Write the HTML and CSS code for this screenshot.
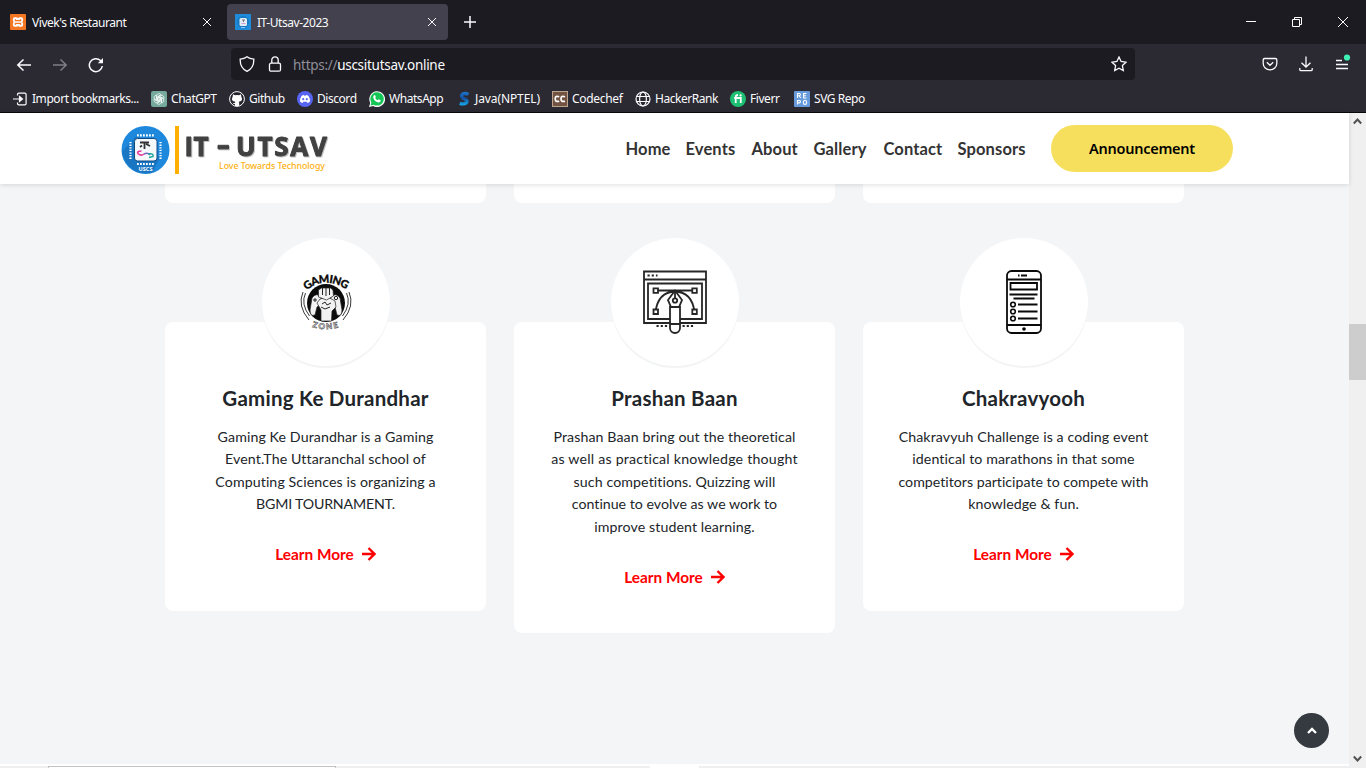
FILE: index.html
```html
<!DOCTYPE html>
<html lang="en">
<head>
<meta charset="utf-8">
<title>IT-Utsav-2023</title>
<link rel="stylesheet" href="styles.css">
</head>
<body>
<div class="browser">
  <div class="tabs">
    <div class="tab">
      <svg class="i16" viewBox="0 0 16 16"><rect width="16" height="16" rx="1" fill="#f37623"/><path d="M4.800 3.200h1.100q1.300 0 2.100.9.800-.9 2.100-.9h1.100q2 0 2 2.200 0 1.500-.9 2.600.9 1.100.9 2.600 0 2.200-2 2.200h-1.100q-1.300 0-2.100-.9-.8.9-2.100.9H4.800q-2 0-2-2.200 0-1.500.9-2.600-.9-1.100-.9-2.600 0-2.200 2-2.200z" fill="#fff"/><path d="M5.400 5.300v1.400h5.200V5.300M5.400 10.700V9.300h5.200v1.400" fill="none" stroke="#f37623" stroke-width="1.300"/></svg>
      <span class="tt">Vivek's Restaurant</span>
      <svg class="x" viewBox="0 0 8 8"><path d="M0 0l8 8M8 0L0 8"/></svg>
    </div>
    <div class="tab on">
      <svg class="i16" viewBox="0 0 16 16"><rect width="16" height="16" fill="#1f8bdb"/><circle cx="8" cy="8" r="6" fill="#1779c4"/><rect x="4.500" y="4" width="7.500" height="8" rx="1.500" fill="#dfeaf5"/><path d="M7 6h3M8.500 6v2" stroke="#777"/><path d="M6.500 9.500h4" stroke="#d39bd0"/><path d="M6 13.500h4" stroke="#8cc4f0"/></svg>
      <span class="tt">IT-Utsav-2023</span>
      <svg class="x" viewBox="0 0 8 8"><path d="M0 0l8 8M8 0L0 8"/></svg>
    </div>
    <svg class="plus" viewBox="0 0 12 12"><path d="M6 0v12M0 6h12"/></svg>
    <div class="win">
      <svg viewBox="0 0 10 10"><path d="M0 4.500h10"/></svg>
      <svg viewBox="0 0 10 10"><path d="M.5 2.500h7v7h-7zM2.500 2.500v-2h7v7h-2"/></svg>
      <svg viewBox="0 0 10 10"><path d="M0 0l10 10M10 0L0 10"/></svg>
    </div>
  </div>
  <div class="bar">
    <div class="navs">
      <svg viewBox="0 0 16 16"><path d="M15 8H1.500M7.500 2.500L1.800 8l5.700 5.500"/></svg>
      <svg class="dim" viewBox="0 0 16 16"><path d="M1 8h13.500M8.500 2.500L14.200 8l-5.700 5.500"/></svg>
      <svg viewBox="0 0 16 16"><path d="M14.300 9A6.500 6.500 0 1 1 12.500 3.600L14 5"/><path d="M15 1v5.200H9.800z" fill="#fbfbfe" stroke="none"/></svg>
    </div>
    <div class="url">
      <svg class="i16" viewBox="0 0 16 16"><path d="M8 .8C6.200 2.300 3.800 3 1.200 3.200 1 8.500 3 13 8 15.300c5-2.300 7-6.800 6.800-12.100C12.200 3 9.800 2.300 8 .8z"/></svg>
      <svg class="i16" viewBox="0 0 16 16"><rect x="2.500" y="7.200" width="11" height="8" rx="1.500"/><path d="M4.800 7V4a3.200 3.200 0 0 1 6.400 0v3"/></svg>
      <span class="addr"><i>https://</i>uscsitutsav.online</span>
      <svg class="star" viewBox="0 0 16 16"><path d="M8 1l2.100 4.500 4.900.7-3.600 3.400.9 5L8 12.200l-4.300 2.400.9-5L1 6.200l4.900-.7z"/></svg>
    </div>
    <div class="tools">
      <svg viewBox="0 0 16 16"><path d="M2.500 2.500h11q1.300 0 1.300 1.300V7.500a6.800 6.300 0 0 1-13.600 0V3.800Q1.200 2.500 2.500 2.500zM4.800 6.300L8 9.300l3.200-3"/></svg>
      <svg viewBox="0 0 16 16"><path d="M8 .5v10.500M3.500 6.800L8 11l4.500-4.200M1.800 12v1.500q0 1.200 1.200 1.200h10q1.200 0 1.200-1.200V12"/></svg>
      <svg viewBox="0 0 16 16"><path d="M2 4.500h6M2 8.500h12M2 12.500h12"/><circle cx="13" cy="1.500" r="3.100" fill="#3ff0b5" stroke="none"/></svg>
    </div>
  </div>
  <div class="marks">
    <div><svg viewBox="0 0 16 16" class="ln"><path d="M5.500 4.500v-1q0-1.300 1.300-1.300h6q1.300 0 1.300 1.300v9q0 1.300-1.300 1.300h-6q-1.300 0-1.300-1.300v-1M1 8h8"/><path d="M7.500 5.500L10.500 8l-3 2.500z" fill="#fbfbfe"/></svg>Import bookmarks...</div>
    <div><svg viewBox="0 0 16 16"><rect width="16" height="16" rx="2" fill="#74a99b"/><g fill="none" stroke="#fff" stroke-width=".7"><path id="k" d="M5.600 8.900V4.800q.3-2 2.400-2.100 1.300 0 2.100 1L6.900 5.600v4.100"/><use href="#k" transform="rotate(60 8 8)"/><use href="#k" transform="rotate(120 8 8)"/><use href="#k" transform="rotate(180 8 8)"/><use href="#k" transform="rotate(240 8 8)"/><use href="#k" transform="rotate(300 8 8)"/></g></svg>ChatGPT</div>
    <div><svg viewBox="0 0 16 16"><circle cx="8" cy="8" r="7.400" fill="#24232b" stroke="#fff"/><path d="M4 3.200l2 1.100q2-.5 4 0l2-1.100.3 2.200q2.200 4.600-2.600 5.400.6.700.5 1.700v2.500H5.900v-2q-1.600.2-2.400-1.500 1.500.9 2.500.2l.3-.9Q1.500 10 3.700 5.400z" fill="#fff"/></svg>Github</div>
    <div><svg viewBox="0 0 16 16"><circle cx="8" cy="8" r="8" fill="#5865f2"/><path d="M4.500 5q1.300-.9 2.500-1l.4.700h1.200L9 4q1.300.1 2.500 1 1.600 2.600 1.500 5.500-1.200 1.100-2.600 1.400l-.7-1.200H6.300l-.7 1.200Q4.200 11.600 3 10.500 2.900 7.600 4.500 5z" fill="#fff"/><circle cx="6.200" cy="8.200" r="1.100" fill="#5865f2"/><circle cx="9.800" cy="8.200" r="1.100" fill="#5865f2"/></svg>Discord</div>
    <div><svg viewBox="0 0 16 16"><path d="M0 16l1.200-4.100A7.900 7.900 0 1 1 4.200 15z" fill="#fff"/><path d="M1.500 14.500l.9-3A6.700 6.700 0 1 1 4.700 13.700z" fill="#14c656"/><path d="M5 4.200l1-.2.900 2-.7 1q1 1.700 2.600 2.300l.9-1 2 1q.2 2-1.800 2.200Q5.500 11 4.200 6.500q-.1-1.500.8-2.300z" fill="#fff"/></svg>WhatsApp</div>
    <div class="java"><svg viewBox="0 0 16 16"><defs><linearGradient id="sg" gradientUnits="userSpaceOnUse" x1="0" y1="1" x2="0" y2="15"><stop stop-color="#1d74cb"/><stop offset=".45" stop-color="#14509c"/><stop offset="1" stop-color="#16b4f5"/></linearGradient></defs><path d="M11.500 3.400Q8.500 1.800 6 2.900 3.300 4.800 5.800 7.100L9 8.600q2 1.600.2 3.300-2.400 1.700-6.500.4" fill="none" stroke="url(#sg)" stroke-width="3.400"/></svg>Java(NPTEL)</div>
    <div class="cc"><svg viewBox="0 0 16 16"><rect x=".5" y=".5" width="15" height="15" fill="#735443" stroke="#bba58f"/><path d="M7.200 5.800Q3.200 4.300 3.200 7.800t4 2.400M13 5.800Q9 4.300 9 7.800t4 2.400" fill="none" stroke="#fff" stroke-width="1.700"/></svg>Codechef</div>
    <div><svg viewBox="0 0 16 16" class="ln"><circle cx="8" cy="8" r="7"/><ellipse cx="8" cy="8" rx="3.400" ry="7"/><path d="M1.800 5.500h12.400M1.800 10.500h12.400"/></svg>HackerRank</div>
    <div><svg viewBox="0 0 16 16"><circle cx="8" cy="8" r="8" fill="#1dbf73"/><path d="M5.700 12V6q0-2 2.300-2M4.200 7h6.600v5" fill="none" stroke="#fff" stroke-width="1.800"/><circle cx="10.600" cy="4.400" r="1.100" fill="#fff"/></svg>Fiverr</div>
    <div><svg viewBox="0 0 16 16"><rect width="16" height="16" rx="1" fill="#689bdb"/><g fill="none" stroke="#fff" stroke-width="1.100"><path d="M3.500 7V2.500h2q2 1 0 2.200h-2M5 4.700L6.800 7M12.500 2.500H9.600V7h2.900M9.600 4.700h2.500M3.500 13.500V9.500h2q2 1 0 2.400h-2"/><ellipse cx="11" cy="11.400" rx="1.700" ry="2"/></g></svg>SVG Repo</div>
  </div>
</div>
<div class="view">
  <div class="page">
    <header class="head">
      <svg class="logo" viewBox="0 0 210 52">
        <circle cx="25.500" cy="26" r="24" fill="#1e88dc"/><path d="M2 28L17 11 40 34 32 49Q8 52 2 28z" fill="#176db5" opacity=".65"/>
        <g stroke="#fff" stroke-width="2.200" fill="none"><path d="M17 11.300h17M17 40h17" stroke-dasharray="1.800 1.200"/><path d="M10.500 18v17M40.500 18v17" stroke-dasharray="1.300 1.300"/></g>
        <rect x="14.500" y="14.500" width="22.500" height="22.500" rx="3" fill="#f4f8fb" stroke="#104b82"/>
        <path d="M20 18.500h9M24.500 18v7M22 21.500l-2 1.500M26 20l4 2" stroke="#333" stroke-width="1.800" fill="none"/>
        <path d="M21.500 27q-5 0-3.500 2.500 3 3 6 .5" fill="none" stroke="#e6399b" stroke-width="1.600"/><path d="M24 30q4-2 6 1" fill="none" stroke="#7a62c9" stroke-width="1.500"/><path d="M28 30q6-1 5 2.500l-4 1" fill="none" stroke="#18a999" stroke-width="1.500"/>
        <text x="18.500" y="46.500" class="uscs" textLength="14">USCS</text>
        <rect x="55" y="2" width="4" height="48" fill="#ffb000"/>
        <g class="lg"><text x="64.500" y="32" textLength="24">IT</text><rect x="98" y="21.300" width="10.500" height="3.600"/><text x="116" y="32" textLength="91">UTSAV</text></g>
        <text x="99" y="45.200" class="tag" textLength="106">Love Towards Technology</text>
      </svg>
      <nav class="menu">
        <a>Home</a><a>Events</a><a>About</a><a>Gallery</a><a>Contact</a><a>Sponsors</a>
      </nav>
      <div class="btn">Announcement</div>
    </header>
    <div class="stubs"><div></div><div></div><div></div></div>
    <main class="cards">
      <section class="card">
        <div class="disc"><svg viewBox="0 0 64 64">
          <path id="arcT" d="M12.500 20.500Q31 5 54 20.500" fill="none"/><path id="arcB" d="M18 57Q32 61.500 46 57" fill="none"/>
          <text class="gz"><textPath href="#arcT" textLength="43">GAMING</textPath></text>
          <text class="gz2"><textPath href="#arcB" textLength="27">ZONE</textPath></text>
          <circle cx="32" cy="33" r="19" fill="#0b0b0b"/>
          <g fill="none" stroke="#222" stroke-width=".9"><path d="M11.500 23q-5 11 4 23M9 22q-6 14 6 28M52.500 23q5 11-4 23M55 22q6 14-6 28"/></g>
          <g fill="#f2f2f2" stroke="#222" stroke-width=".7"><path d="M18 28q4-6 9-1l1 6-5 4-2 8q-5 2-5-5zM46 28q-4-6-9-1l-1 6 5 4 2 8q5 2 5-5z"/><path d="M27 51l0-11-4-7 3-4 8-2 7 4 1 6-4 4-.5 10z"/><path d="M24.500 20l3-2h9l2.500 2 .5 6-7 4-8-3z"/></g>
          <g fill="none" stroke="#222" stroke-width="1"><path d="M28.500 18v7M32 18v8M35.500 18v7M19 30h4M21 28v4M28 34l3-2 2 3 4-2M27 37l4 2 5-2"/></g><circle cx="42" cy="28" r="1.700" fill="none" stroke="#222"/>
        </svg></div>
        <h3>Gaming Ke Durandhar</h3>
        <p><span>Gaming Ke Durandhar is a Gaming</span><span>Event.The Uttaranchal school of</span><span>Computing Sciences is organizing a</span><span class="tight">BGMI TOURNAMENT.</span></p>
        <a class="more">Learn More<svg viewBox="0 0 14 14"><path d="M0 7h12M6.500 1l6 6-6 6"/></svg></a>
      </section>
      <section class="card">
        <div class="disc"><svg viewBox="0 0 64 64" fill="none" stroke="#262626" stroke-width="1.800">
          <path d="M1 1.500h62v51.500H1zM1 9.500h62M5 13.500h54v35.500H5z"/><path d="M12.500 20.500h39M12.500 42Q15 22 32 21.500 49 22 51.500 42"/>
          <g fill="#fff"><path d="M10.500 18.300h4.500v4.500h-4.500zM49.300 18.300h4.500v4.500h-4.500zM10.500 39.500h4.500v4.500h-4.500zM49.300 39.500h4.500v4.500h-4.500z"/><path d="M32 20.500l7 9.500-3 7h-8l-3-7z"/><path d="M27 37h10v21a5 5 0 0 1-10 0z"/></g>
          <path d="M27 54h10M32 21v7"/><circle cx="32" cy="30.500" r="2.200"/><path d="M4.500 5.500h10M13.500 56h11M39.500 56h11" stroke-dasharray="2.200 2"/>
        </svg></div>
        <h3>Prashan Baan</h3>
        <p><span>Prashan Baan bring out the theoretical</span><span class="wide">as well as practical knowledge thought</span><span>such competitions. Quizzing will</span><span class="even">continue to evolve as we work to</span><span>improve student learning.</span></p>
        <a class="more">Learn More<svg viewBox="0 0 14 14"><path d="M0 7h12M6.500 1l6 6-6 6"/></svg></a>
      </section>
      <section class="card">
        <div class="disc"><svg viewBox="0 0 64 64" fill="none" stroke="#0a0a0a" stroke-width="1.800">
          <rect x="15" y="1" width="34" height="62" rx="4.500"/><path d="M15 9.500h34M15 55h34M18.500 13h26.500v6.500H18.500zM17.500 24.500h28M21.500 28.500h21M26 34.500h19.500M26 41.500h19.500M26 48.500h19.500"/>
          <g stroke-width="1.600"><circle cx="21" cy="34.500" r="2.300"/><circle cx="21" cy="41.500" r="2.300"/><circle cx="21" cy="48.500" r="2.300"/></g><circle cx="32" cy="59" r="1.800" fill="#000" stroke="none"/><path d="M29 5.500h6M26 5.500h1.500" stroke-width="2"/>
        </svg></div>
        <h3>Chakravyooh</h3>
        <p><span>Chakravyuh Challenge is a coding event</span><span>identical to marathons in that some</span><span class="even">competitors participate to compete with</span><span>knowledge &amp; fun.</span></p>
        <a class="more">Learn More<svg viewBox="0 0 14 14"><path d="M0 7h12M6.500 1l6 6-6 6"/></svg></a>
      </section>
    </main>
    <div class="top"><svg viewBox="0 0 10 8"><path d="M1 6l4-4 4 4"/></svg></div>
    <footer class="hs"><div class="hthumb"></div><div class="hgap"></div></footer>
  </div>
  <div class="scroll">
    <svg viewBox="0 0 9 7"><path d="M.8 5.500l3.700-4 3.700 4"/></svg>
    <div class="thumb"></div>
    <svg viewBox="0 0 9 7"><path d="M.8 1.500l3.700 4 3.700-4"/></svg>
  </div>
</div>
</body>
</html>
```
FILE: styles.css
```css
* { box-sizing: border-box; }
body { margin: 0; width: 1366px; height: 768px; overflow: hidden; font-family: "Lato", sans-serif; font-variant-ligatures: none; }
svg { display: block; flex: none; }
.i16 { width: 16px; height: 16px; }

/* Browser chrome */
.browser { height: 113px; background: #2b2a33; border-bottom: 1px solid #08080a; color: #fbfbfe; font-family: "Noto Sans", sans-serif; font-size: 12px; letter-spacing: -.45px; white-space: nowrap; }
.tabs { height: 44px; background: #1c1b22; display: flex; align-items: center; padding-left: 2px; }
.tab { display: flex; align-items: center; width: 221px; height: 36px; padding: 0 12px 0 8px; }
.tab.on { background: #42414d; border-radius: 4px; margin-left: 4px; }
.tab .tt { flex: 1; margin-left: 6px; line-height: 16px; padding-top: 1px; }
.x { width: 8px; height: 8px; fill: none; stroke: #fbfbfe; }
.plus { width: 12px; height: 12px; margin-left: 16px; fill: none; stroke: #fbfbfe; stroke-width: 1.5; }
.win { margin-left: auto; display: flex; gap: 36px; padding-right: 18px; }
.win svg { width: 10px; height: 10px; fill: none; stroke: #fff; }
.bar { height: 42px; display: flex; align-items: center; padding-bottom: 2px; }
.navs { display: flex; gap: 20px; width: 231px; padding: 1px 0 0 16px; }
.navs svg { width: 16px; height: 16px; fill: none; stroke: #fbfbfe; stroke-width: 1.5; }
.navs .dim { opacity: .4; }
.url { width: 904px; height: 32px; background: #1c1b22; border-radius: 4px; display: flex; align-items: center; padding: 0 8px; gap: 12px; }
.url svg { fill: none; stroke: #fbfbfe; stroke-width: 1.3; }
.url .star { width: 16px; height: 16px; }
.addr { flex: 1; font-size: 13.5px; letter-spacing: -.29px; margin-left: -2px; padding-top: 1px; }
.addr i { font-style: normal; color: #8f8f98; }
.tools { display: flex; gap: 20px; margin-left: 127px; }
.tools svg { width: 16px; height: 16px; fill: none; stroke: #fbfbfe; stroke-width: 1.3; overflow: visible; }
.marks { display: grid; grid-template-columns: 139px 78px 68px 72px 88px 95px 83px 95px 64px 80px; padding-left: 12px; height: 25px; }
.marks div { display: flex; align-items: center; gap: 4px; }
.marks .java { gap: 2px; letter-spacing: -.1px; }
.marks .cc { letter-spacing: -.3px; }
.marks svg { width: 16px; height: 16px; }
.marks .ln { fill: none; stroke: #fbfbfe; stroke-width: 1.2; }

/* Page */
.view { display: flex; height: 655px; }
.page { width: 1349px; background: #f4f5f7; position: relative; display: flex; flex-direction: column; }
.head { height: 71px; background: #fff; box-shadow: 0 1px 5px rgba(0,0,0,.13); display: flex; align-items: center; padding-left: 120px; flex: none; position: relative; z-index: 2; }
.logo { width: 210px; height: 52px; margin-top: 3px; }
.uscs { font: 700 5.5px "Open Sans", sans-serif; fill: #fff; }
.lg { font: 700 26px "Open Sans", sans-serif; fill: #414141; stroke: #414141; stroke-width: 1; stroke-linejoin: round; filter: drop-shadow(1px 1.5px 0 #c2c2c2); }
.tag { font: 500 8.8px "Noto Sans", sans-serif; fill: #fdb010; }
.menu { display: grid; grid-template-columns: 60px 66px 62px 70px 74px 70px; margin: 0 0 0 295.5px; font-size: 16.5px; letter-spacing: .12px; font-weight: 700; color: #333; }
.btn { margin-left: 23.5px; width: 182px; height: 47px; border-radius: 24px; background: #f7df5e; display: flex; align-items: center; justify-content: center; font: 600 14.5px "Noto Sans", sans-serif; letter-spacing: -.27px; color: #000; padding-bottom: 1px; }
.stubs, .cards { display: grid; grid-template-columns: repeat(3, 321px); gap: 28px; padding-left: 165px; align-items: start; }
.stubs div { height: 19px; background: #fff; border-radius: 0 0 8px 8px; }
.cards { margin-top: 119px; flex: 1; }
.card { background: #fff; border-radius: 8px; display: flex; flex-direction: column; align-items: center; padding-bottom: 45.4px; color: #212529; }
.disc { width: 128px; height: 128px; margin-top: -84px; border-radius: 50%; background: #fff; box-shadow: 0 2px 1px #f2f3f5; display: flex; align-items: center; justify-content: center; }
.disc svg { width: 64px; height: 64px; }
.gz { font: 900 11px "Lato", sans-serif; fill: #0b0b0b; stroke: #0b0b0b; stroke-width: .3; }
.gz2 { font: 900 8px "Lato", sans-serif; fill: #fff; stroke: #555; stroke-width: .6; }
h3 { margin: 20px 0 0; font-size: 20.5px; letter-spacing: .23px; line-height: 24px; font-weight: 700; }
p { margin: 16px 0 0; font-size: 14.2px; letter-spacing: .09px; line-height: 22.4px; display: flex; flex-direction: column; align-items: center; }
.wide { letter-spacing: .2px; }
.even { letter-spacing: 0; }
.tight { letter-spacing: -.19px; }
.more { margin-top: 27.6px; display: flex; align-items: center; gap: 8px; color: #f00; font-size: 15.4px; line-height: 22px; font-weight: 700; }
.more svg { width: 14px; height: 14px; fill: none; stroke: #f00; stroke-width: 2.4; }
.top { position: absolute; left: 1294px; top: 600px; width: 35px; height: 35px; border-radius: 50%; background: #343a40; display: flex; align-items: center; justify-content: center; }
.top svg { width: 10px; height: 8px; fill: none; stroke: #fff; stroke-width: 2.4; }
.hs { height: 4px; border-top: 2px solid #fff; background: #efefef; display: flex; }
.hthumb { margin-left: 48px; width: 288px; border: 1px solid #c4c4c4; border-bottom: 0; background: #fff; }
.hgap { margin-left: 314px; width: 49px; background: #fff; }
.scroll { width: 17px; background: #f0f0f0; display: flex; flex-direction: column; align-items: center; padding: 5px 0 6px; }
.scroll svg { width: 9px; height: 7px; fill: none; stroke: #505050; stroke-width: 1.9; }
.thumb { width: 17px; height: 56px; background: #cdcdcd; margin: 199px 0 auto; }
```
